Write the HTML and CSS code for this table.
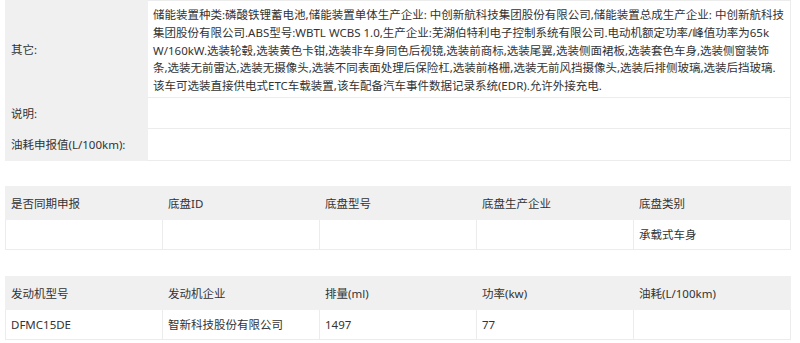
FILE: index.html
```html
<!DOCTYPE html>
<html lang="zh-CN">
<head>
<meta charset="utf-8">
<title>车辆参数</title>
<link rel="stylesheet" href="styles.css">
</head>
<body>
<div class="page">
  <table class="spec info">
    <colgroup><col class="label-col"><col></colgroup>
    <tr class="row-long">
      <th>其它:</th>
      <td class="long">储能装置种类:磷酸铁锂蓄电池,储能装置单体生产企业: 中创新航科技集团股份有限公司,储能装置总成生产企业: 中创新航科技<br>集团股份有限公司.ABS型号:WBTL WCBS 1.0,生产企业:芜湖伯特利电子控制系统有限公司.电动机额定功率/峰值功率为65k<br>W/160kW.选装轮毂,选装黄色卡钳,选装非车身同色后视镜,选装前商标,选装尾翼,选装侧面裙板,选装套色车身,选装侧窗装饰<br>条,选装无前雷达,选装无摄像头,选装不同表面处理后保险杠,选装前格栅,选装无前风挡摄像头,选装后排侧玻璃,选装后挡玻璃.<br>该车可选装直接供电式ETC车载装置,该车配备汽车事件数据记录系统(EDR).允许外接充电.</td>
    </tr>
    <tr class="row-a">
      <th>说明:</th>
      <td></td>
    </tr>
    <tr class="row-b">
      <th>油耗申报值(L/100km):</th>
      <td></td>
    </tr>
  </table>

  <table class="spec grid chassis">
    <tr class="head">
      <th>是否同期申报</th>
      <th>底盘ID</th>
      <th>底盘型号</th>
      <th>底盘生产企业</th>
      <th>底盘类别</th>
    </tr>
    <tr class="data">
      <td></td>
      <td></td>
      <td></td>
      <td></td>
      <td>承载式车身</td>
    </tr>
  </table>

  <table class="spec grid engine">
    <tr class="head">
      <th>发动机型号</th>
      <th>发动机企业</th>
      <th>排量(ml)</th>
      <th>功率(kw)</th>
      <th>油耗(L/100km)</th>
    </tr>
    <tr class="data">
      <td>DFMC15DE</td>
      <td>智新科技股份有限公司</td>
      <td>1497</td>
      <td>77</td>
      <td></td>
    </tr>
  </table>
</div>
</body>
</html>
```

FILE: styles.css
```css
html, body {
  margin: 0;
  padding: 0;
  background: #ffffff;
}

body {
  font-family: "Noto Sans", "Noto Sans CJK SC", sans-serif;
  font-size: 11.5px;
  color: #333333;
}

.page {
  padding: 0 9px 0 5px;
}

.spec {
  width: 786px;
  border-collapse: collapse;
  table-layout: fixed;
  border: 1px solid #ececec;
}

.spec th,
.spec td {
  border: 1px solid #ececec;
  padding: 0 5px;
  text-align: left;
  font-weight: normal;
  vertical-align: middle;
  white-space: nowrap;
}

.info .label-col {
  width: 142px;
}

.info th {
  background: #f0f0f0;
  border-color: #f0f0f0;
}

.info td {
  background: #ffffff;
}

.info .long {
  white-space: normal;
  word-break: break-all;
  line-height: 17.75px;
  padding-top: 5px;
  padding-bottom: 2px;
}

.info .row-a th,
.info .row-a td {
  height: 30px;
}

.info .row-b th,
.info .row-b td {
  height: 31px;
}

.chassis {
  margin-top: 25px;
}

.engine {
  margin-top: 26px;
}

.grid .head th {
  background: #f0f0f0;
  border-color: #f0f0f0;
  height: 32px;
}

.grid .data td {
  height: 29px;
}
```
